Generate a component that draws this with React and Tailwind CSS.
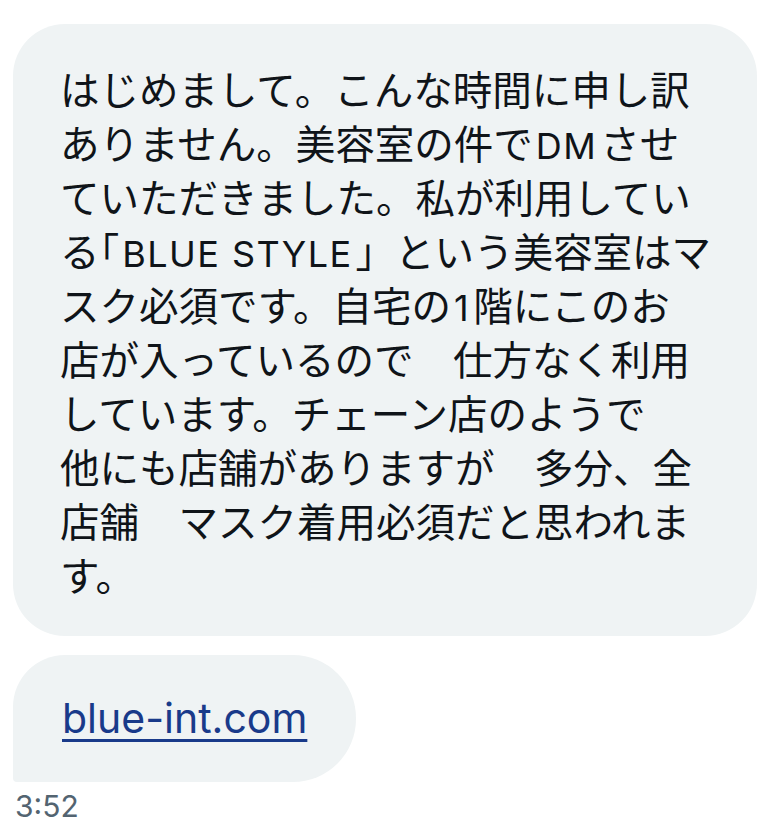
const lines = [
  'はじめまして。こんな時間に申し訳',
  ['ありません。美容室の件で', { latin: 'DM' }, 'させ'],
  'ていただきました。私が利用してい',
  ['る', { half: '「' }, { latin: 'BLUE STYLE' }, '」という美容室はマ'],
  ['スク必須です。自宅の', { latin: '1' }, '階にこのお'],
  '店が入っているので　仕方なく利用',
  'しています。チェーン店のようで',
  '他にも店舗がありますが　多分、全',
  '店舗　マスク着用必須だと思われま',
  'す。',
];

function Line({ parts }) {
  const list = Array.isArray(parts) ? parts : [parts];
  return (
    <div className="whitespace-pre">
      {list.map((p, i) => {
        if (typeof p === 'string') return <span key={i}>{p}</span>;
        if (p.half)
          return (
            <span key={i} className="[font-feature-settings:'halt']">
              {p.half}
            </span>
          );
        return (
          <span key={i} className="mx-[3px] font-['Inter',sans-serif] text-[36px] leading-none tracking-[0.04em]">
            {p.latin}
          </span>
        );
      })}
    </div>
  );
}

export default function App() {
  return (
    <div className="w-[777px] h-[834px] bg-white pt-6 pl-[13px] pr-5 font-['Inter','Noto_Sans_CJK_JP',sans-serif]">
      {/* incoming message */}
      <div className="rounded-[52px] bg-[#eff3f4] pl-[47px] pr-6 pt-[37px] pb-[35px] text-[39.5px] leading-[54px] text-[#0f1419] font-['Noto_Sans_CJK_JP',sans-serif]">
        {lines.map((l, i) => (
          <Line key={i} parts={l} />
        ))}
      </div>

      {/* link bubble */}
      <div className="mt-[19px] flex">
        <div className="rounded-tl-[52px] rounded-r-[63px] rounded-bl-[4px] bg-[#eff3f4] pl-[49px] pr-[49px] pt-[39px] pb-[40px]">
          <span className="font-['Inter',sans-serif] text-[41px] leading-[48px] text-[#193a8a] underline decoration-[3px] underline-offset-[6px]">
            blue-int.com
          </span>
        </div>
      </div>

      <div className="mt-[9px] pl-[2px] font-['Inter',sans-serif] text-[30px] leading-[30px] text-[#536471]">
        3:52
      </div>
    </div>
  );
}
